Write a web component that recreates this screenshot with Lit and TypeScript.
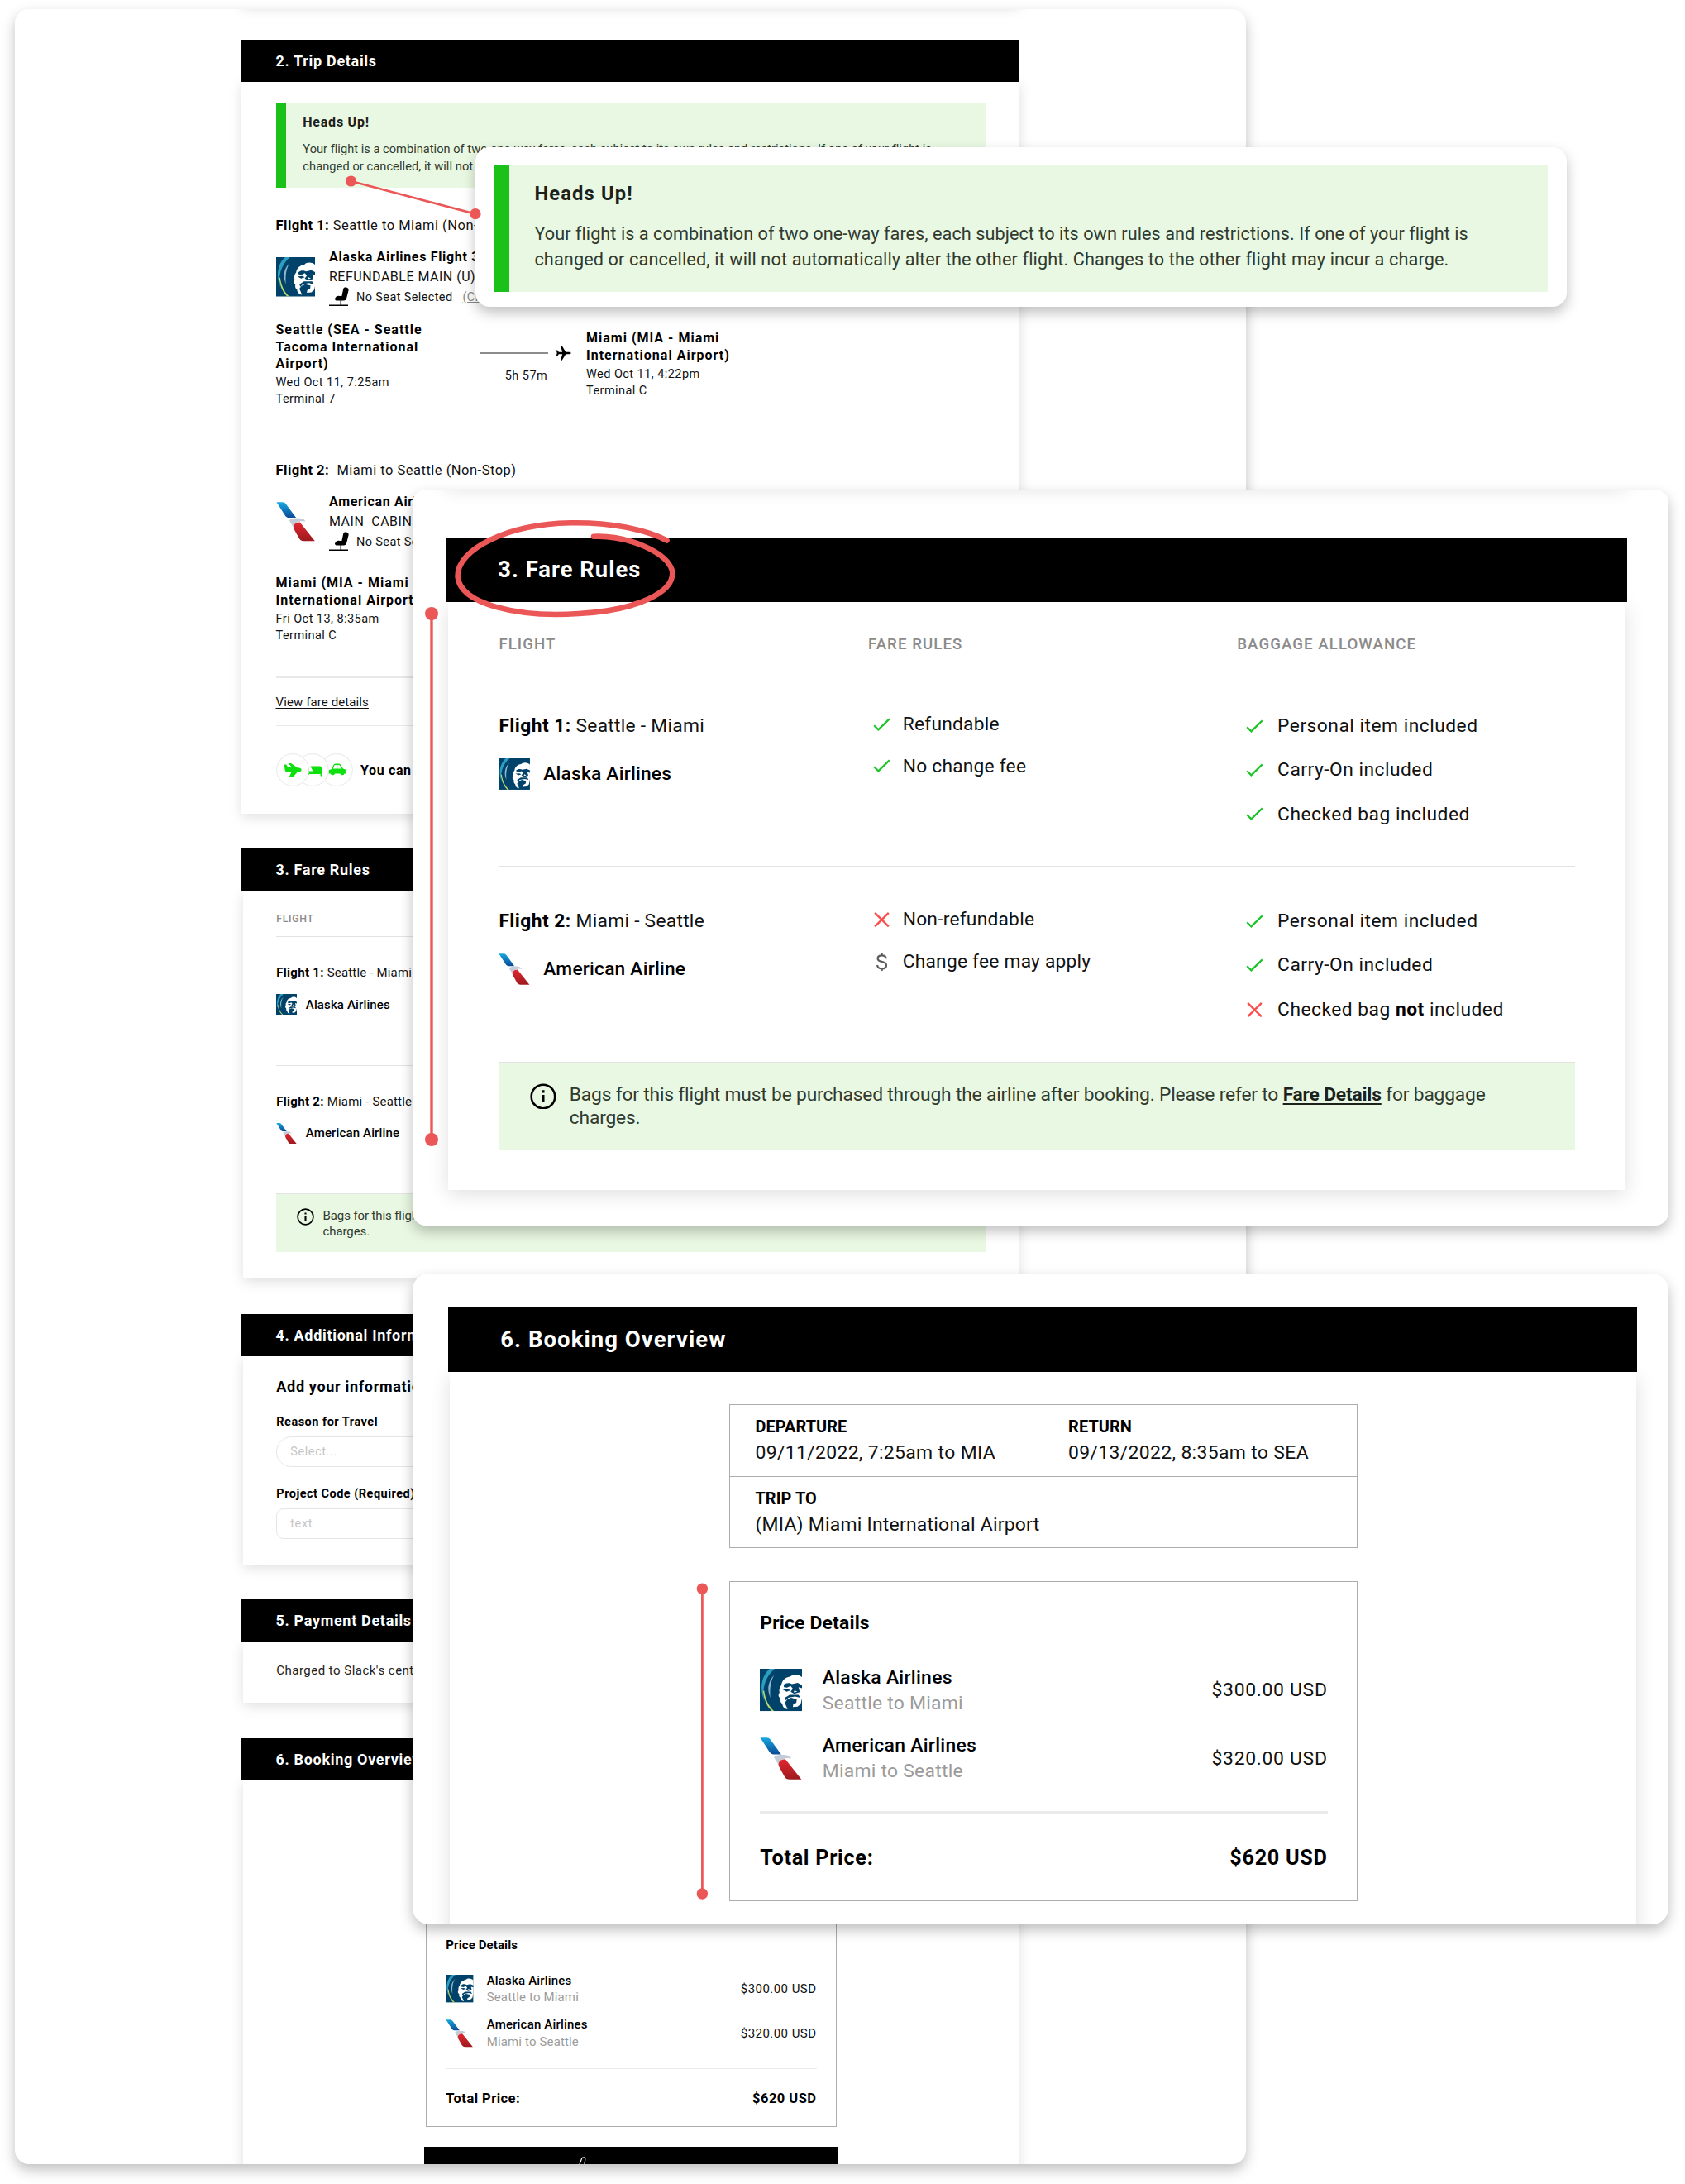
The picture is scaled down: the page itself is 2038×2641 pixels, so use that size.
import { LitElement, html, svg, css, nothing } from "lit";
import { customElement, property } from "lit/decorators.js";

const type = css`
  :host {
    display: block;
    font-family: Roboto, "Liberation Sans", sans-serif;
    color: #111;
  }
  * {
    box-sizing: border-box;
  }
  svg {
    display: block;
    flex: none;
  }
  b {
    font-weight: 700;
    color: #000;
  }
`;

/* ---------- Icons ---------- */

const check = html`<svg width="14" height="11" viewBox="0 0 14 11">
  <path d="M.8 6.1 4.2 9.5 13 .9" fill="none" stroke="#1fc32a" stroke-width="1.5" />
</svg>`;

const cross = html`<svg width="14" height="12" viewBox="0 0 14 12">
  <path d="M1.4.6 12.4 11.4M12.4.6 1.4 11.4" fill="none" stroke="#f9504e" stroke-width="1.6" />
</svg>`;

const dollar = html`<svg width="14" height="15" viewBox="0 0 14 15">
  <path
    d="M10.3 4.8C10.2 3 8.9 2.2 7 2.2 5 2.2 3.7 3.1 3.7 4.7 3.7 8.2 10.5 6.2 10.5 10 10.5 11.7 9.1 12.7 7 12.7 4.9 12.7 3.5 11.7 3.4 9.9M7 .2V2.4M7 12.6V14.9"
    fill="none"
    stroke="#5c5c5c"
    stroke-width="1.5"
  />
</svg>`;

const info = html`<svg width="21" height="21" viewBox="0 0 21 21">
  <circle cx="10.5" cy="10.5" r="9.4" fill="none" stroke="#000" stroke-width="1.7" />
  <path d="M10.5 9.3V15.2M10.5 5.5V7.6" stroke="#000" stroke-width="2.1" />
</svg>`;

const seat = html`<svg width="24" height="24" viewBox="0 0 24 24">
  <path
    d="M17.2 2.6C17.5 1 19 .2 20.8.4 22.8.7 23.9 2 23.6 4L21.2 13.6C20.8 15.6 19.6 16.6 17.6 16.6H10C8 16.6 7 15.8 7 14.3 8 11.6 10 10.6 12.6 10.9H15.4Z"
  />
  <path d="M14.3 16V21.5M0 22.2H23" stroke="#000" stroke-width="1.5" fill="none" />
</svg>`;

const jet = html`<svg width="19" height="18" viewBox="0 0 19 18">
  <path
    d="M18.5 9C18.5 8.2 17.9 7.7 17 7.7H12.3L7.7.3H5.9L8.2 7.7H3.8L2.2 5.5H.7L1.7 9 .7 12.5H2.2L3.8 10.3H8.2L5.9 17.7H7.7L12.3 10.3H17C17.9 10.3 18.5 9.8 18.5 9Z"
  />
</svg>`;

const planeGlyph = svg`<path d="M9.8 13.500H12.200L14.200 16.600H18.800L14.500 12H18L26 17.500H28C30 17.800 30.800 19.200 30.600 20.600 30 22.300 28 22.800 25.500 22.800L20.500 28.800H15.600L18.400 22.800H14C11.800 22.800 10.800 21.500 10.500 19.500Z" fill="#0ee010"/>`;
const bedGlyph = svg`<path d="M12 14.8 16 18.4V25.8H12ZM17.4 15.6H28.4Q32 15.6 32 19V27.6H29.6V25H16V21.6H20.6Z" fill="#0ee010"/>`;
const carGlyph = svg`<path d="M10.4 20.2 14.3 18.9 16.2 14.2Q16.9 12.6 18.6 12.6H22.6Q24.2 12.6 25.1 13.9L28 18.4 30.6 19.4Q32 20 32 21.8V24.4H29.6A2.7 2.7 0 0 1 24.4 24.4H18A2.7 2.7 0 0 1 12.8 24.4H10.4ZM15.9 18.4H20V14H18.6Q17.6 14 17.3 14.8ZM21.2 18.4H26.4L24 14.7Q23.5 14 22.6 14H21.2Z" fill="#0ee010" fill-rule="evenodd"/>`;

const alaska = (size: number) => html`<svg width=${size} height=${size} viewBox="0 0 48 48">
  <rect width="48" height="48" fill="#01426a" />
  <path d="M17 0C6 9 1.500 24 5.500 38L3 30C0 17 4 6 11 0Z" fill="#2a9fbf" />
  <path d="M3.600 25C4.500 35 8 43 13.500 48H16C9.500 42 6 34 5 25Z" fill="#bcd96b" />
  <path d="M16.500 7C9 14 8 24 12 33 11 24 12 14 16.500 7Z" fill="#8eb7cf" />
  <path
    d="M48 9.500C43 5.500 37.500 6 34.500 9 29 9.500 25 13.500 24.500 18.500 22.500 21 21.500 24 22.500 27 20.500 29.500 21 32 23.500 33.500 22.800 37 24 38.500 25.500 39.500 26 43 27.500 45.500 31.500 46 30.500 42.500 29 41 28.500 38.500L31 35 35.500 33 42 34.500 41.500 38.500 38 40.500 37.500 43.500 43 43 46.500 40 48 33Z"
    fill="#fff"
  />
  <path d="M27 18.500C30 15.500 34 16 36.500 17.500L43 16 48 18.500V22L44 21 45.500 26.500 39 28.500 35 26 37.500 22.500 35 19.500 31 21.500 27.500 21Z" fill="#01426a" />
  <path d="M26 23.500 32 23 35 24.500 30.500 26ZM28.500 33 34 29.500H44L46 33 40 31.500 32.500 33 29.500 36Z" fill="#01426a" />
  <path d="M33 35.500H41L39.500 37.500 34 37.700Z" fill="#01426a" />
  <path d="M39.500 24.500 42.500 26 38.500 26.800Z" fill="#fff" />
</svg>`;

let gradientSeed = 0;
const american = (size: number) => {
  const id = `aa${gradientSeed++}`;
  return html`<svg width=${size} height=${size} viewBox="0 0 47 48">
    <defs>
      <linearGradient id="${id}b" x1="0" y1="0" x2="0" y2="1">
        <stop offset="0" stop-color="#17a9e0" />
        <stop offset="1" stop-color="#0b4a96" />
      </linearGradient>
      <linearGradient id="${id}r" x1="0" y1="0" x2="0" y2="1">
        <stop offset="0" stop-color="#e3262e" />
        <stop offset="1" stop-color="#9c1a20" />
      </linearGradient>
    </defs>
    <path d="M0 .2H7C9 .2 10.500 1 11.500 2.400L23.800 19.200H15.500C13 19.200 11.300 18 10 15.800Z" fill="url(#${id}b)" />
    <path d="M15.500 22.500C17 20.500 19.500 20 23.500 19.800 29 19.500 34.500 20.800 35.200 24 31 23 26 23.500 23.500 26.500 21.800 28.500 21.300 30.500 21.500 32.500Z" fill="#c3ccd6" />
    <path d="M28.500 24.700 46.800 47.800H33.500C30.500 47.800 28.800 46.800 27.300 44L21.200 33C19.800 28.500 22.500 24.800 28.500 24.700Z" fill="url(#${id}r)" />
  </svg>`;
};

/* ---------- Section card ---------- */

@customElement("section-card")
export class SectionCard extends LitElement {
  @property() heading = "";
  @property({ type: Boolean }) inset = false;

  static styles = [
    type,
    css`
      .card {
        position: relative;
        display: flex;
        flex-direction: column;
        height: 100%;
      }
      .bar {
        position: relative;
        height: 51.5px;
        flex: none;
        padding-left: 41.5px;
        background: #000;
        color: #fff;
        font-size: 18px;
        font-weight: 700;
        line-height: 52.4px;
        letter-spacing: 0.038em;
      }
      .body {
        flex: 1;
        padding: 0 41.5px;
        background: #fff;
        box-shadow: 0 4px 15px rgba(0, 0, 0, 0.13);
      }
      .inset {
        margin: 0 1px 0 1.8px;
        padding: 0 40.5px;
      }
    `,
  ];

  render() {
    return html`<div class="card">
      <div class="bar">${this.heading}</div>
      <div class="body ${this.inset ? "inset" : ""}"><slot></slot></div>
    </div>`;
  }
}

/* ---------- Heads-up notice ---------- */

@customElement("heads-up")
export class HeadsUp extends LitElement {
  static styles = [
    type,
    css`
      .notice {
        height: 103.5px;
        padding: 14.2px 0 0 20.8px;
        border-left: 12.4px solid #19c119;
        background: #e9f8e2;
        white-space: nowrap;
      }
      .title {
        color: #1c211b;
        font-size: 16px;
        font-weight: 700;
        line-height: 20px;
        letter-spacing: 0.048em;
      }
      .text {
        margin-top: 12.5px;
        color: #313a2f;
        font-size: 14.6px;
        line-height: 20.7px;
        letter-spacing: 0.002em;
      }
      .second {
        letter-spacing: 0.0055em;
      }
    `,
  ];

  render() {
    return html`<div class="notice">
      <div class="title">Heads Up!</div>
      <div class="text">
        <div>Your flight is a combination of two one-way fares, each subject to its own rules and restrictions. If one of your flight is</div>
        <div class="second">
          changed or cancelled, it will not automatically alter the other flight. Changes to the other flight may incur a charge.
        </div>
      </div>
    </div>`;
  }
}

/* ---------- Trip details ---------- */

interface Stop {
  name: string[];
  when: string;
  terminal: string;
}
interface Leg {
  label: string;
  route: string;
  airline: "alaska" | "american";
  flight: string;
  cabin: string;
  from: Stop;
  to: Stop;
  duration: string;
}

const legs: Leg[] = [
  {
    label: "Flight 1:",
    route: " Seattle to Miami (Non-Stop)",
    airline: "alaska",
    flight: "Alaska Airlines Flight 3",
    cabin: "REFUNDABLE MAIN (U)",
    from: { name: ["Seattle (SEA - Seattle", "Tacoma International", "Airport)"], when: "Wed Oct 11, 7:25am", terminal: "Terminal 7" },
    to: { name: ["Miami (MIA - Miami", "International Airport)"], when: "Wed Oct 11, 4:22pm", terminal: "Terminal C" },
    duration: "5h 57m",
  },
  {
    label: "Flight 2:",
    route: "\u00a0 Miami to Seattle (Non-Stop)",
    airline: "american",
    flight: "American Airlines",
    cabin: "MAIN\u00a0 CABIN",
    from: { name: ["Miami (MIA - Miami", "International Airport)"], when: "Fri Oct 13, 8:35am", terminal: "Terminal C" },
    to: { name: ["Seattle (SEA - Seattle", "Tacoma International", "Airport)"], when: "Fri Oct 13", terminal: "Terminal 7" },
    duration: "5h 57m",
  },
];

@customElement("trip-details")
export class TripDetails extends LitElement {
  static styles = [
    type,
    css`
      .body {
        padding: 24.5px 0 33px;
        white-space: nowrap;
      }
      .leg {
        padding-top: 33.5px;
      }
      .route {
        font-size: 16.5px;
        line-height: 24px;
        letter-spacing: 0.03em;
      }
      .carrier {
        display: flex;
        align-items: center;
        gap: 17px;
        height: 72px;
        margin-top: 14px;
      }
      .lines {
        display: flex;
        flex-direction: column;
        height: 72px;
      }
      .flight,
      .cabin {
        font-size: 16px;
        line-height: 24.2px;
        letter-spacing: 0.031em;
      }
      .flight {
        color: #000;
        font-weight: 700;
        letter-spacing: 0.042em;
      }
      .seat {
        display: flex;
        align-items: center;
        gap: 9px;
        height: 24px;
        font-size: 14.5px;
        letter-spacing: 0.026em;
      }
      .seat u {
        margin-left: 3px;
        color: #8a8a8a;
      }
      .stops {
        display: grid;
        grid-template-columns: 246.5px 111px auto;
        align-items: center;
        margin-top: 18px;
        min-height: 105px;
      }
      .stop + .path + .stop {
        padding-left: 18px;
      }
      .airport {
        margin-bottom: 2px;
        color: #000;
        font-size: 16px;
        font-weight: 700;
        line-height: 20.7px;
        letter-spacing: 0.063em;
      }
      .fine {
        font-size: 14.5px;
        line-height: 20.5px;
        letter-spacing: 0.031em;
      }
      .path {
        display: flex;
        flex-direction: column;
        gap: 8.5px;
      }
      .track {
        display: flex;
        align-items: center;
        justify-content: space-between;
      }
      .track i {
        width: 83px;
        height: 2px;
        background: #8c8c8c;
      }
      .path .fine {
        padding-left: 2px;
        text-align: center;
        line-height: 20px;
      }
      .rule {
        height: 1.5px;
        margin-top: 28px;
        background: #e9e9e9;
      }
      .link {
        margin-top: 19px;
        font-size: 15px;
        line-height: 20px;
        letter-spacing: 0.007em;
        text-decoration: underline;
        text-underline-offset: 2px;
      }
      .link + .rule {
        margin-top: 18px;
      }
      .extras {
        display: flex;
        align-items: center;
        margin-top: 33px;
        color: #000;
        font-size: 16px;
        font-weight: 700;
        letter-spacing: 0.04em;
      }
      .extras svg {
        position: relative;
      }
      .first {
        z-index: 3;
      }
      .second {
        z-index: 2;
        margin-left: -16px;
      }
      .third {
        z-index: 1;
        margin: 0 9px 0 -10.5px;
      }
    `,
  ];

  private stop(s: Stop) {
    return html`<div class="stop">
      <div class="airport">${s.name.map((n, i) => html`${i ? html`<br />` : nothing}${n}`)}</div>
      <div class="fine">${s.when}</div>
      <div class="fine">${s.terminal}</div>
    </div>`;
  }

  private leg(l: Leg) {
    return html`<div class="leg">
        <div class="route"><b>${l.label}</b>${l.route}</div>
        <div class="carrier">
          ${l.airline === "alaska" ? alaska(47.5) : american(47.5)}
          <div class="lines">
            <div class="flight">${l.flight}</div>
            <div class="cabin">${l.cabin}</div>
            <div class="seat">${seat}<span>No Seat Selected</span><u>(Change)</u></div>
          </div>
        </div>
        <div class="stops">
          ${this.stop(l.from)}
          <div class="path">
            <div class="track"><i></i>${jet}</div>
            <div class="fine">${l.duration}</div>
          </div>
          ${this.stop(l.to)}
        </div>
      </div>
      <div class="rule"></div>`;
  }

  private badge(cls: string, glyph: unknown) {
    return html`<svg class=${cls} width="40" height="40" viewBox="0 0 40 40">
      <circle cx="20" cy="20" r="19.3" fill="#fff" stroke="#ececec" stroke-width="1.2" />
      ${glyph}
    </svg>`;
  }

  render() {
    return html`<section-card heading="2. Trip Details">
      <div class="body">
        <heads-up></heads-up>
        ${legs.map((l) => this.leg(l))}
        <div class="link">View fare details</div>
        <div class="rule"></div>
        <div class="extras">
          ${this.badge("first", planeGlyph)}${this.badge("second", bedGlyph)}${this.badge("third", carGlyph)}
          <span>You can</span>
        </div>
      </div>
    </section-card>`;
  }
}

/* ---------- Fare rules ---------- */

const fares = [
  {
    label: "Flight 1:",
    route: "Seattle - Miami",
    logo: alaska,
    airline: "Alaska Airlines",
    rules: [
      [check, "Refundable"],
      [check, "No change fee"],
    ],
    bags: [
      [check, "Personal item included"],
      [check, "Carry-On included"],
      [check, "Checked bag included"],
    ],
  },
  {
    label: "Flight 2:",
    route: "Miami - Seattle",
    logo: american,
    airline: "American Airline",
    rules: [
      [cross, "Non-refundable"],
      [dollar, "Change fee may apply"],
    ],
    bags: [
      [check, "Personal item included"],
      [check, "Carry-On included"],
      [cross, html`Checked bag <b>not</b> included`],
    ],
  },
];

@customElement("fare-rules")
export class FareRules extends LitElement {
  static styles = [
    type,
    css`
      .body {
        padding: 23.5px 0 32px;
        white-space: nowrap;
      }
      .row {
        display: grid;
        grid-template-columns: 294.2px 294px 1fr;
        border-bottom: 1px solid #e3e3e3;
      }
      .head {
        height: 32px;
        color: #8b8b8b;
        font-size: 12.3px;
        font-weight: 500;
        line-height: 20px;
        letter-spacing: 0.057em;
      }
      .fare {
        height: 155.6px;
        padding-top: 33.2px;
        font-size: 15px;
        line-height: 20px;
        letter-spacing: 0.02em;
      }
      .fare:last-of-type {
        border: 0;
      }
      .route {
        letter-spacing: 0.012em;
      }
      .route b {
        letter-spacing: 0.02em;
      }
      .airline {
        display: flex;
        align-items: center;
        gap: 10.5px;
        margin-top: 15.8px;
        color: #000;
        font-weight: 500;
        letter-spacing: 0.009em;
      }
      .list {
        display: flex;
        flex-direction: column;
        gap: 13.2px;
        margin-top: -0.9px;
        padding-left: 4.3px;
        letter-spacing: 0.01em;
      }
      .bags {
        gap: 15.2px;
        margin-top: 0.1px;
        padding-left: 7.4px;
        letter-spacing: 0.022em;
      }
      .item {
        display: flex;
        align-items: center;
        gap: 9.2px;
        height: 20px;
      }
      .bags .item {
        gap: 10.8px;
      }
      .note {
        display: flex;
        gap: 10.6px;
        height: 70px;
        padding: 16.5px 0 0 24.7px;
        background: #e9f8e2;
        color: #313a2f;
        font-size: 15px;
        line-height: 19px;
        letter-spacing: -0.0075em;
      }
      .note b {
        color: #1c211b;
        text-decoration: underline;
        text-underline-offset: 2px;
      }
    `,
  ];

  render() {
    const item = ([icon, text]: unknown[]) => html`<div class="item">${icon}<span>${text}</span></div>`;
    return html`<section-card heading="3. Fare Rules" inset>
      <div class="body">
        <div class="row head"><span>FLIGHT</span><span>FARE RULES</span><span>BAGGAGE ALLOWANCE</span></div>
        ${fares.map(
          (f) => html`<div class="row fare">
            <div>
              <div class="route"><b>${f.label}</b> ${f.route}</div>
              <div class="airline">${f.logo(25)}<span>${f.airline}</span></div>
            </div>
            <div class="list">${f.rules.map(item)}</div>
            <div class="list bags">${f.bags.map(item)}</div>
          </div>`
        )}
        <div class="note">
          ${info}
          <span
            >Bags for this flight must be purchased through the airline after booking. Please refer to <b>Fare Details</b> for
            baggage<br />charges.</span
          >
        </div>
      </div>
    </section-card>`;
  }
}

/* ---------- Additional information ---------- */

@customElement("additional-info")
export class AdditionalInfo extends LitElement {
  static styles = [
    type,
    css`
      .body {
        padding: 24.6px 0 31.7px;
        white-space: nowrap;
        color: #000;
      }
      .title {
        font-size: 18px;
        font-weight: 700;
        line-height: 24px;
        letter-spacing: 0.038em;
      }
      .label {
        margin-top: 23.5px;
        font-size: 14.5px;
        font-weight: 700;
        line-height: 20px;
        letter-spacing: 0.034em;
      }
      .title + .label {
        margin-top: 21.6px;
      }
      .field {
        height: 37px;
        margin-top: 6.4px;
        padding-left: 16px;
        border: 1.4px solid #e6e6e6;
        border-radius: 19px;
        color: #c6c6c6;
        font-size: 14.5px;
        line-height: 35px;
        letter-spacing: 0.04em;
      }
      .square {
        border-radius: 9px;
      }
    `,
  ];

  render() {
    return html`<section-card heading="4. Additional Information" inset>
      <div class="body">
        <div class="title">Add your information</div>
        <div class="label">Reason for Travel</div>
        <div class="field">Select...</div>
        <div class="label">Project Code (Required)</div>
        <div class="field square">text</div>
      </div>
    </section-card>`;
  }
}

/* ---------- Booking overview ---------- */

@customElement("booking-overview")
export class BookingOverview extends LitElement {
  static styles = [
    type,
    css`
      .body {
        width: 497px;
        margin-left: 180.6px;
        padding-top: 25.5px;
        white-space: nowrap;
      }
      .summary,
      .prices {
        border: 1.3px solid #adadad;
      }
      .summary {
        display: grid;
        grid-template-columns: 247px 1fr;
        height: 114px;
      }
      .cell {
        height: 56.4px;
        padding: 7.9px 0 0 19.6px;
        font-size: 15px;
        line-height: 20.2px;
        letter-spacing: 0.01em;
      }
      .cell:not(.wide) {
        letter-spacing: 0.015em;
      }
      .cell b {
        display: block;
        font-size: 13px;
        letter-spacing: 0.005em;
      }
      .cell + .cell {
        border-left: 1.3px solid #adadad;
      }
      .cell.wide {
        grid-column: 1 / -1;
        border-top: 1.3px solid #adadad;
        border-left: 0;
      }
      .prices {
        height: 253.5px;
        margin-top: 25.8px;
        padding: 23.1px 23.4px 0;
        font-size: 15px;
      }
      .title {
        color: #000;
        font-weight: 700;
        line-height: 20px;
        letter-spacing: 0.007em;
      }
      .line {
        display: flex;
        align-items: center;
        height: 41px;
        margin-top: 12.8px;
        line-height: 20.5px;
        letter-spacing: 0.03em;
      }
      .title + .line {
        margin-top: 22.3px;
      }
      .who {
        flex: 1;
        margin-left: 16px;
        color: #9b9b9b;
        letter-spacing: 0.01em;
      }
      .who span {
        display: block;
        color: #000;
        font-weight: 500;
        letter-spacing: 0.012em;
      }
      .rule {
        height: 1.5px;
        margin-top: 21.5px;
        background: #ebebeb;
      }
      .total {
        display: flex;
        justify-content: space-between;
        margin-top: 23.5px;
        color: #000;
        font-size: 16.5px;
        font-weight: 700;
        line-height: 24px;
        letter-spacing: 0.028em;
      }
      .action {
        display: flex;
        justify-content: flex-start;
        height: 60px;
        margin: 24.5px -1.5px 0;
        padding: 12px 0 0 184px;
        background: #000;
      }
    `,
  ];

  render() {
    const line = (logo: unknown, name: string, route: string, price: string) =>
      html`<div class="line">
        ${logo}
        <div class="who"><span>${name}</span>${route}</div>
        <div>${price}</div>
      </div>`;
    return html`<section-card heading="6. Booking Overview" inset>
      <div class="body">
        <div class="summary">
          <div class="cell"><b>DEPARTURE</b>09/11/2022, 7:25am to MIA</div>
          <div class="cell"><b>RETURN</b>09/13/2022, 8:35am to SEA</div>
          <div class="cell wide"><b>TRIP TO</b>(MIA) Miami International Airport</div>
        </div>
        <div class="prices">
          <div class="title">Price Details</div>
          ${line(alaska(33.4), "Alaska Airlines", "Seattle to Miami", "$300.00 USD")}
          ${line(american(33.4), "American Airlines", "Miami to Seattle", "$320.00 USD")}
          <div class="rule"></div>
          <div class="total"><span>Total Price:</span><span>$620 USD</span></div>
        </div>
        <div class="action">
          <svg width="14" height="24" viewBox="0 0 14 24">
            <path d="M2.500 13 6.500 2.500Q7.300.8 9.200.9 11.100 1.200 10.800 3.200L9.500 13" fill="none" stroke="#fff" stroke-width="1.2" />
          </svg>
        </div>
      </div>
    </section-card>`;
  }
}

/* ---------- Board ---------- */

@customElement("app-root")
export class AppRoot extends LitElement {
  static styles = [
    type,
    css`
      .board {
        position: relative;
        width: 2038px;
        height: 2641px;
        padding: 11px 0 0 18px;
        overflow: hidden;
        background: #fff;
      }
      .panel {
        overflow: hidden;
        background: #fff;
        box-shadow: 0 7px 16px rgba(0, 0, 0, 0.25);
      }
      .page {
        display: flex;
        flex-direction: column;
        gap: 42.2px;
        width: 1489px;
        height: 2606px;
        padding: 0 274px;
        border-radius: 17px;
      }
      .above {
        flex: none;
        height: 30px;
        margin: -35.4px 0 0;
        background: #fff;
        box-shadow: 0 4px 15px rgba(0, 0, 0, 0.13);
      }
      .page > * {
        flex: none;
      }
      .page booking-overview {
        height: 600px;
      }
      .charged {
        padding: 24px 0 29.4px;
        font-size: 15px;
        line-height: 20px;
        letter-spacing: 0.032em;
        white-space: nowrap;
        color: #222;
      }
      .callout {
        position: absolute;
      }
      .notice {
        left: 575px;
        top: 178px;
        width: 1320px;
        height: 193px;
        padding: 21px 0 0 22.5px;
        border-radius: 17px;
      }
      .notice heads-up {
        width: 858px;
        zoom: 1.485;
      }
      .rules {
        left: 499px;
        top: 592px;
        width: 1519px;
        height: 890px;
        padding: 1.6px 0 0 40.2px;
        border-radius: 16px;
      }
      .rules .zoomed {
        display: flex;
        flex-direction: column;
        gap: 42.4px;
        width: 941px;
        zoom: 1.518;
      }
      .booking {
        left: 499px;
        top: 1540px;
        width: 1519px;
        height: 787px;
        padding: 40.2px 0 0 42.7px;
        border-radius: 20px;
      }
      .booking booking-overview {
        width: 941px;
        zoom: 1.529;
      }
      .marks {
        position: absolute;
        left: 0;
        top: 0;
      }
    `,
  ];

  render() {
    return html`<div class="board">
      <main class="panel page">
        <div class="above"></div>
        <trip-details></trip-details>
        <fare-rules></fare-rules>
        <additional-info></additional-info>
        <section-card heading="5. Payment Details" inset>
          <div class="charged">Charged to Slack's central</div>
        </section-card>
        <booking-overview></booking-overview>
      </main>

      <div class="panel callout notice"><heads-up></heads-up></div>
      <div class="panel callout rules">
        <div class="zoomed">
          <div class="above"></div>
          <fare-rules></fare-rules>
        </div>
      </div>
      <div class="panel callout booking"><booking-overview></booking-overview></div>

      <svg class="marks" width="2038" height="2641" viewBox="0 0 2038 2641" fill="#eb5757" stroke="#eb5757">
        <path d="M424.500 219 575 258.700" stroke-width="2.700" />
        <path d="M522 742V1378" stroke-width="3.400" />
        <path d="M849.400 1921V2290" stroke-width="2.700" />
        <g stroke="none">
          <circle cx="424.500" cy="219" r="6.600" />
          <circle cx="575" cy="258.700" r="6.600" />
          <circle cx="522" cy="742" r="8" />
          <circle cx="522" cy="1378" r="8" />
          <circle cx="849.400" cy="1921.300" r="6.700" />
          <circle cx="849.400" cy="2290" r="6.700" />
        </g>
        <path
          d="M718 648.700C758 647 806 667 813 690 817 716 771 738 700 742 628 747 556 731 553.500 697 553 664 613 634 690 632.300 738 631.500 781 640 806.500 653.500"
          fill="none"
          stroke-width="6.600"
          stroke-linecap="round"
        />
      </svg>
    </div>`;
  }
}
